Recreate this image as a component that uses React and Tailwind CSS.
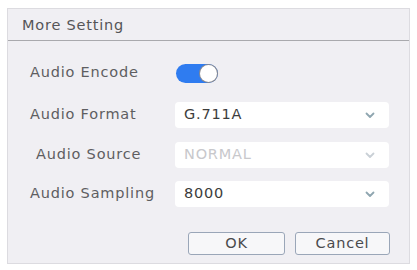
import React, { useState } from "react";

function Chevron({ muted }) {
    return (
        <svg width="10" height="7" viewBox="0 0 10 7" className={muted ? "text-[#c9d0d6]" : "text-[#8fa6b0]"}>
            <path d="M1.5 1.5 L5 5 L8.5 1.5" fill="none" stroke="currentColor" strokeWidth="1.8" strokeLinecap="round" strokeLinejoin="round" />
        </svg>
    );
}

function Select({ value, disabled }) {
    return (
        <div className="flex h-[26px] w-[214px] items-center justify-between rounded-[4px] bg-white pl-[9px] pr-[14px]">
            <span className={disabled ? "text-[#c8c8cc]" : "text-[#3c3c3c]"}>{value}</span>
            <Chevron muted={disabled} />
        </div>
    );
}

export default function App() {
    const [encode, setEncode] = useState(true);

    return (
        <div className="h-[270px] w-[417px] bg-white pl-[7px] pt-[8px] text-[14.5px] tracking-[0.8px] [font-family:'DejaVu_Sans','Noto_Sans',sans-serif]">
            <div className="h-[256px] w-[403px] border border-[#dcdbe0] bg-[#f0eff3]">
                {/* title */}
                <div className="flex h-[32px] items-center border-b border-[#a9a9ad] pl-[14px] pt-[3px] text-[#555558]">
                    More Setting
                </div>

                <div className="flex flex-col pl-[22px] pt-[21px] text-[#5e5e61]">
                    <div className="flex h-[22px] items-center">
                        <span className="w-[146px]">Audio Encode</span>
                        <button
                            onClick={() => setEncode(!encode)}
                            className={"flex h-[19px] w-[42px] items-center rounded-full px-[1px] " + (encode ? "justify-end bg-[#2f7cf0]" : "justify-start bg-[#c6c6cc]")}
                        >
                            <span className="h-[17px] w-[17px] rounded-full bg-white shadow-[0_0_0_1px_#8a8a90]"></span>
                        </button>
                    </div>

                    <div className="mt-[18px] flex items-center">
                        <span className="w-[145px]">Audio Format</span>
                        <Select value="G.711A" />
                    </div>

                    <div className="mt-[14px] flex items-center">
                        <span className="w-[145px] pl-[6px]">Audio Source</span>
                        <Select value="NORMAL" disabled />
                    </div>

                    <div className="mt-[13px] flex items-center">
                        <span className="w-[145px]">Audio Sampling</span>
                        <Select value="8000" />
                    </div>

                    <div className="mt-[25px] flex justify-end gap-[10px] pr-[19px]">
                        <button className="h-[23px] w-[97px] rounded-[3px] border border-[#9aa6b8] bg-[#f7f7f9] text-[#4a4a4d]">OK</button>
                        <button className="h-[23px] w-[95px] rounded-[3px] border border-[#9aa6b8] bg-[#f7f7f9] text-[#4a4a4d]">Cancel</button>
                    </div>
                </div>
            </div>
        </div>
    );
}
